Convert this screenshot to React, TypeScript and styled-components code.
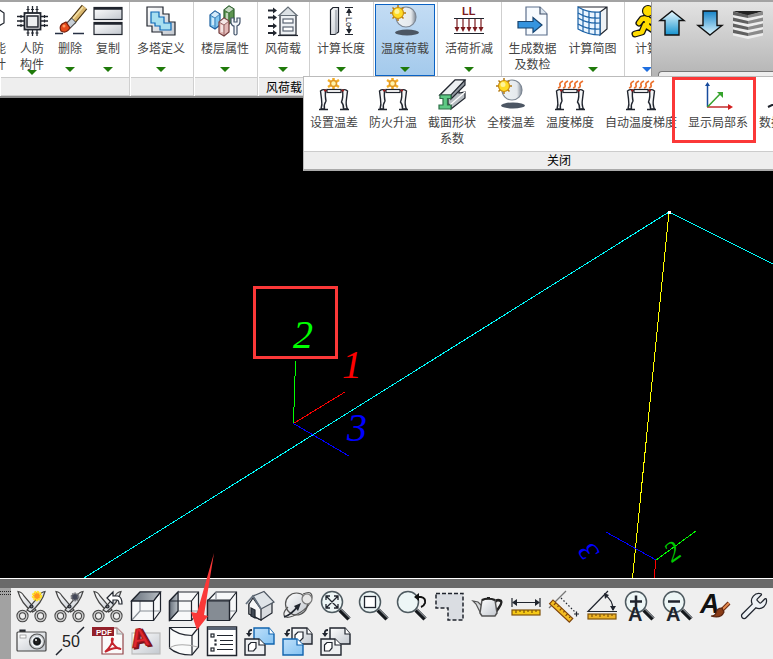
import React from "react";
import styled, { createGlobalStyle, css } from "styled-components";

const GlobalStyle = createGlobalStyle`
  * { box-sizing: border-box; }
  html, body { margin: 0; height: 100%; overflow: hidden; }
  body { font-family: "Liberation Sans", "Noto Sans CJK SC", sans-serif; font-size: 12px; line-height: 16px; color: #444; }
  button { font: inherit; color: inherit; background: none; border: 0; padding: 0; margin: 0; }
`;

const Shell = styled.div`
  position: relative;
  display: flex;
  flex-direction: column;
  height: 100vh;
  overflow: hidden;
  background: #000;
`;

/* ---------- ribbon ---------- */

const Ribbon = styled.header`
  position: relative;
  z-index: 2;
  display: flex;
  flex: none;
  height: 98px;
  background: #fff;
  border-top: 2px solid #a3a3a3;
  border-bottom: 2px solid #8a8a8a;
`;

const Group = styled.section<{ $w?: number }>`
  display: flex;
  flex-direction: column;
  flex: ${(p) => (p.$w ? "none" : "1")};
  width: ${(p) => (p.$w ? `${p.$w}px` : "auto")};
  min-width: 0;
  overflow: hidden;
  border-right: 1px solid #cfcfcf;
`;

const GroupBody = styled.div<{ $end?: boolean; $start?: boolean }>`
  display: flex;
  flex: 1;
  padding: 2px ${(p) => (p.$end ? 2 : 1)}px 1px 0;
  justify-content: ${(p) => (p.$end ? "flex-end" : p.$start ? "flex-start" : "center")};
`;

const GroupTitle = styled.div`
  height: 19px;
  margin: 0 0 0 1px;
  padding-top: 2px;
  background: #eee;
  border-top: 1px solid #ccc;
  border-bottom: 1px solid #ccc;
  color: #000;
  text-align: center;
`;

const RibbonButton = styled.button<{ $active?: boolean; $w?: number }>`
  display: flex;
  flex-direction: column;
  align-items: center;
  flex: none;
  width: ${(p) => p.$w ?? 60}px;
  height: 72px;
  padding-top: 1px;
  border: 1px solid transparent;
  ${(p) =>
    p.$active &&
    css`
      border-color: #0a62c4;
      background: linear-gradient(#c3dcf4, #a4caec);
    `}
`;

const Label = styled.span`
  min-height: 26px;
  margin-top: 5px;
  text-align: center;
  white-space: pre;
`;

const Caret = styled.span<{ $color?: string }>`
  border: 5px solid transparent;
  border-top-color: ${(p) => p.$color ?? "#1f7a0a"};
  border-bottom: 0;
`;

const NavPanel = styled.nav`
  position: absolute;
  top: 0;
  right: 0;
  display: flex;
  flex-direction: column;
  justify-content: space-between;
  width: 122px;
  height: 75px;
  padding: 4px 0 0 1px;
  background: linear-gradient(#e3e3e3, #b4b4b4);
  border-left: 1px solid #999;
`;

const NavRow = styled.div`
  display: flex;
`;

const NavButton = styled.button`
  flex: none;
  width: 38px;
  height: 32px;
`;

const NavTray = styled.div`
  height: 6px;
  margin-left: 5px;
  background: #eee;
  border: 1px solid #777;
  border-width: 1px 0 0 1px;
  border-radius: 4px 0 0 0;
`;

/* ---------- drop-down panel ---------- */

const DropPanel = styled.section`
  position: absolute;
  top: 76px;
  left: 303px;
  z-index: 3;
  width: 512px;
  background: #fff;
  border: 1px solid #bbb;
  border-bottom: 2px solid #aaa;
`;

const DropItems = styled.div`
  display: flex;
  gap: 11px;
  height: 74px;
  padding: 2px 0 0 6px;
`;

const DropButton = styled.button<{ $left?: boolean }>`
  display: flex;
  flex: none;
  flex-direction: column;
  align-items: center;
  min-width: 48px;
  ${Label} {
    margin-top: 6px;
    align-self: ${(p) => (p.$left ? "flex-start" : "center")};
  }
`;

const CloseButton = styled.button`
  display: block;
  width: 100%;
  height: 18px;
  background: #eee;
  border-top: 1px solid #ccc;
  color: #000;
`;

/* ---------- drawing area ---------- */

const Viewport = styled.main`
  flex: 1;
  min-height: 0;
  overflow: hidden;
  background: #000;
`;

const SceneSvg = styled.svg`
  display: block;
  width: 100%;
  height: 100%;
  font-family: "Liberation Serif", serif;
  font-style: italic;
`;

const Mark = styled.div<{ $x: number; $y: number; $w: number; $h: number }>`
  position: absolute;
  z-index: 4;
  left: ${(p) => p.$x}px;
  top: ${(p) => p.$y}px;
  width: ${(p) => p.$w}px;
  height: ${(p) => p.$h}px;
  border: 3px solid #fb3838;
  pointer-events: none;
`;

const Pointer = styled.svg`
  position: absolute;
  z-index: 4;
  left: 190px;
  bottom: 28px;
  pointer-events: none;
`;

/* ---------- bottom toolbar ---------- */

const BottomBar = styled.footer`
  display: flex;
  flex: none;
  border-top: 1px solid #fff;
  background: #efefef;
  box-shadow: inset 0 9px #6a6a6a;
  padding-top: 9px;
`;

const Grip = styled.div`
  width: 11px;
  flex: none;
  padding-top: 3px;
  background: #a2a2a2;
`;

const GripDots = styled.div`
  height: 4px;
  border: 1px dotted #222;
  border-width: 1px 0;
`;

const Rows = styled.div`
  flex: 1;
  min-width: 0;
  padding: 0 0 1px 2px;
`;

const ToolRow = styled.div`
  display: flex;
  height: 35px;
`;

const ToolButton = styled.button`
  display: flex;
  justify-content: center;
  flex: none;
  width: 38px;
  padding-top: 3px;
`;

const IconSvg = styled.svg`
  display: block;
  flex: none;
  margin: 0 auto;
  overflow: visible;
  font-family: "Liberation Sans", sans-serif;
`;

const Icon = ({ children }: { children: React.ReactNode }) => (
  <IconSvg width="30" height="30" viewBox="0 0 30 30" fill="none" stroke="#20252e" strokeWidth="1.2" aria-hidden="true">
    <defs>
      <linearGradient id="metal" x2="1" y2="1"><stop stopColor="#fff" /><stop offset="1" stopColor="#c3c8cf" /></linearGradient>
      <linearGradient id="shade" x2="1" y2="0"><stop stopColor="#68717c" /><stop offset="1" stopColor="#b8bec4" /></linearGradient>
      <linearGradient id="moon" x2="1"><stop stopColor="#eef3f6" /><stop offset=".75" stopColor="#e5e9ed" /><stop offset="1" stopColor="#7d8794" /></linearGradient>
      <linearGradient id="aqua" y2="1" x2="0"><stop stopColor="#eafaff" /><stop offset="1" stopColor="#1593cf" /></linearGradient>
      <linearGradient id="aquaDown" y2="1" x2="0"><stop stopColor="#1583c8" /><stop offset="1" stopColor="#dff7ff" /></linearGradient>
      <linearGradient id="sky" x2="1" y2="1"><stop stopColor="#bfe0fa" /><stop offset="1" stopColor="#83c2f2" /></linearGradient>
    </defs>
    {children}
  </IconSvg>
);

/* ---------- ribbon icons ---------- */

const Hexagon = () => (
  <Icon><path d="M8 6 16 1 25 7V17L16 22 8 17Z" fill="#fff" /></Icon>
);

const Chip = () => (
  <Icon>
    <path d="M11 0V7M15.500 0V7M20 0V7M11 23V30M15.500 23V30M20 23V30M0 10.500H7M0 15H7M0 19.500H7M24 10.500H31M24 15H31M24 19.500H31" strokeWidth="1.300" />
    <path d="M9.500 3.500H12.500M14 3.500H17M18.500 3.500H21.500M9.500 27H12.500M14 27H17M18.500 27H21.500M4 9V12M4 13.500V16.500M4 18V21M27.500 9V12M27.500 13.500V16.500M27.500 18V21" />
    <rect x="7.500" y="7" width="16" height="16.500" fill="#fff" strokeWidth="1.800" />
    <rect x="10" y="10" width="11" height="11" fill="#eceef0" strokeWidth="1.500" />
  </Icon>
);

const Brush = () => (
  <Icon>
    <path d="M0 27.500H29" stroke="#273044" strokeWidth="1.500" strokeDasharray="8 10 11 2" />
    <path d="M29.500 1 17 16" stroke="#453010" strokeWidth="7" />
    <path d="M29.500 1 17 16" stroke="#d9b66d" strokeWidth="5" />
    <path d="M28 1 16 15" stroke="#f4e0a5" strokeWidth="1.500" />
    <path d="M19 14 13 20" stroke="#444" strokeWidth="7" />
    <path d="M18.500 14.500 13 20" stroke="#c9d0d7" strokeWidth="5" />
    <path d="M7 18Q4 21 6 25 11 28 15 22L11 16Z" fill="#e64a19" stroke="#761f0b" />
    <circle cx="9" cy="20" r="1.500" fill="#ff9a62" stroke="none" />
  </Icon>
);

const Copies = () => (
  <Icon>
    <rect x="1" y="1.500" width="28" height="12" fill="url(#metal)" />
    <rect x="1" y="16.500" width="28" height="12" fill="url(#metal)" />
    <path d="M1 2.500H29M1 17.500H29" strokeWidth="2.500" />
  </Icon>
);

const Towers = () => (
  <Icon>
    <path d="M1 1H17V8H23V16H29V29H16V26H6V20H1Z" fill="url(#metal)" />
    <path d="M5 6H13V11H18V17H25V24H14V20H9V17H5Z" fill="#a7dff0" stroke="#0b67b5" />
  </Icon>
);

const Prism = ({ x, y, fill, line }: { x: number; y: number; fill: string; line: string }) => (
  <g transform={`translate(${x} ${y})`} stroke={line}>
    <path d="M0 4 5 0 10 3V14L5 18 0 15Z" fill={fill} />
    <path d="M0 4 5 7 10 3 5 0Z" fill="#fff" fillOpacity=".65" strokeWidth=".7" />
    <path d="M3 7V14" stroke="#fff" strokeOpacity=".6" strokeWidth="2.500" />
    <path d="M5 7V18" strokeWidth=".7" />
  </g>
);

const WRENCH =
  "M14.7 6.3a1 1 0 0 0 0 1.400l1.600 1.600a1 1 0 0 0 1.400 0l3.106-3.105c.32-.322.863-.22.983.218a6 6 0 0 1-8.259 7.057l-7.910 7.910a1 1 0 0 1-2.999-3l7.910-7.910a6 6 0 0 1 7.057-8.259c.438.12.54.662.219.984z";

const Floors = () => (
  <Icon>
    <Prism x={14} y={0} fill="#5d9550" line="#285d28" />
    <Prism x={0} y={5} fill="#83c7ef" line="#1c60a0" />
    <Prism x={9} y={12} fill="#e3b9b7" line="#743c3d" />
    <path d="M21 12V17Q22 20 24 20V28Q25.500 30 27 28V20Q30 19 30 16V12L27 12V16H24V12Z" fill="#f4f7fa" stroke="#43546b" />
  </Icon>
);

const Wind = () => (
  <Icon>
    <path d="M0 4.500H7M0 11.500H7M0 20H7M0 27H7" strokeWidth="1.800" />
    <path d="M5 1.500 9 4.500 5 7.500ZM5 8.500 9 11.500 5 14.500ZM5 17 9 20 5 23ZM5 24 9 27 5 30Z" fill="#20252e" stroke="none" />
    <path d="M12 9.500H28V29H12Z" fill="#edf0f3" />
    <path d="M11 9.500 20 1 29 9.500Z" fill="#dce1e5" stroke="#666f78" />
    <path d="M10 29.500H30" />
    <rect x="15" y="13" width="10" height="4" fill="#fff" stroke="#5b6573" />
    <rect x="15" y="21" width="10" height="4" fill="#fff" stroke="#5b6573" />
  </Icon>
);

const ColumnLength = () => (
  <Icon>
    <path d="M4.500 4 7 1.500H12.500V26L9 28.500H4.500Z" fill="url(#metal)" />
    <path d="M10 4V28" stroke="#969da6" />
    <path d="M19 1.500H27M19 28.500H27M23 3V10M23 20V27" />
    <path d="M20 7 23 2 26 7ZM20 23 23 28 26 23Z" fill="#20252e" stroke="none" />
    <text x="0" y="0" transform="translate(20 11) rotate(90)" fill="#20252e" stroke="none" fontSize="9">Lo</text>
  </Icon>
);

const SunMoon = () => (
  <Icon>
    <ellipse cx="17" cy="26.500" rx="12" ry="3" fill="#4c5663" stroke="none" />
    <circle cx="16" cy="11" r="10" fill="url(#moon)" stroke="#7d8794" />
    <path d="M8-1V15M0 7H16M2.500 1.500 13.500 12.500M13.500 1.500 2.500 12.500" stroke="#b47a13" strokeWidth="1.500" />
    <circle cx="8" cy="7" r="5.500" fill="#ffdc27" stroke="#c98c10" />
    <circle cx="7" cy="5.500" r="2.500" fill="#fff49a" stroke="none" />
  </Icon>
);

const LiveLoad = () => (
  <Icon>
    <text x="8" y="9" fill="#7b1b1e" stroke="none" fontSize="11" fontWeight="700">LL</text>
    <path d="M0 12.500H30M0 27.500H30" />
    <path d="M3 13V24M9 13V24M15 13V24M21 13V24M27 13V24" stroke="#7b1b1e" />
    <path d="M.5 21H5.500L3 26ZM6.500 21H11.500L9 26ZM12.500 21H17.500L15 26ZM18.500 21H23.500L21 26ZM24.500 21H29.500L27 26Z" fill="#7b1b1e" stroke="none" />
  </Icon>
);

const Generate = () => (
  <Icon>
    <path d="M8 1H22L29 8V29H8Z" fill="#f7fbff" stroke="#5d708d" />
    <path d="M22 1V8H29" fill="#dbe5ef" stroke="#40516a" />
    <path d="M0 15.500H15V11.500L24 19 15 26.500V22H0Z" fill="#3594df" stroke="#18446f" />
  </Icon>
);

const GridSurface = () => (
  <Icon>
    <path d="M0 1H29V23L22 29V6L29 1" fill="#eef2f5" />
    <path d="M0 1Q10 7 22 6V29Q10 29 0 23Z" fill="#eaf5ff" stroke="#1a61a6" />
    <path d="M5 3.500V26M11 5.500V28M17 6V29M0 7Q10 13 22 12M0 12Q10 18 22 17M0 18Q10 24 22 23" stroke="#1a61a6" />
  </Icon>
);

const Runner = () => (
  <Icon>
    <path d="M15 12 10 13 7 17M15 13 15 20 21 24M13 19 10 26 3 28M15 13 22 17" stroke="#111" strokeWidth="7" strokeLinecap="round" strokeLinejoin="round" />
    <path d="M15 12 10 13 7 17M15 13 15 20 21 24M13 19 10 26 3 28M15 13 22 17" stroke="#ffdc00" strokeWidth="4.500" strokeLinecap="round" strokeLinejoin="round" />
    <circle cx="16" cy="5" r="5.500" fill="#ffdc00" stroke="#111" />
  </Icon>
);

const UpArrow = () => (
  <Icon><path d="M15 4 27 13.500H22V28H8V13.500H3Z" fill="url(#aqua)" stroke="#111" strokeWidth="1.400" /></Icon>
);
const DownArrow = () => (
  <Icon><path d="M15 28 27 18.500H22V4H8V18.500H3Z" fill="url(#aquaDown)" stroke="#111" strokeWidth="1.400" /></Icon>
);
const Stack = () => (
  <Icon>
    <g stroke="none">
      <path d="M0 4H30L15 9Z" fill="#222" />
      {[0, 6, 12, 18].map((d) => (
        <g key={d} transform={`translate(0 ${d})`}>
          <path d="M0 4.500 15 8V12L0 9Z" fill="#606060" />
          <path d="M30 4.500 15 8V12L30 9Z" fill="#8a8a8a" />
          <path d="M0 8 15 11 30 8V10.500L15 14 0 10.500Z" fill="#ededed" />
        </g>
      ))}
    </g>
  </Icon>
);

/* ---------- drop-down icons ---------- */

const FrameShape = () => (
  <>
    <path d="M6.500 11Q6 18 7 22 4.500 26 5.500 30H2Q3.500 26 2.500 20L1.500 12Q4 10 6.500 11ZM23.500 11Q26 10 28.500 12L27.500 20Q26.500 26 28.500 30H24.500Q25 26 22.500 23 24.500 18 23.500 11Z" fill="#f6f7f8" strokeWidth="1.400" />
    <path d="M0 30.500H9M21 30.500H30" strokeWidth="1.500" />
    <path d="M5 11.500H25" stroke="#a32020" strokeWidth="1.800" />
    <rect x="8" y="10.500" width="14" height="3" fill="#fff" />
  </>
);

const FrameSun = () => (
  <Icon>
    <path d="M14.500-1V10M9 1 20 8M20 1 9 8" stroke="#f3ac25" strokeWidth="2.500" />
    <circle cx="14.500" cy="4.500" r="3" fill="#fff4ad" stroke="#e19722" strokeWidth="1.500" />
    <FrameShape />
  </Icon>
);

const Flame = ({ x }: { x: number }) => (
  <path d={`M${x} 9Q${x + 3} 8 ${x + 2} 6T${x + 5} 2`} />
);

const FrameFlame = () => (
  <Icon>
    <g stroke="#ec7330" strokeWidth="1.700">
      {[3, 8, 13, 18, 23].map((x) => <Flame key={x} x={x} />)}
    </g>
    <FrameShape />
  </Icon>
);

const SteelSection = () => (
  <Icon>
    <path d="M11 20 22 9V14L28 13V19L14 30V26L11 25Z" fill="#b8bec3" />
    <path d="M3 16 18 1H28V6L14 20V16Z" fill="#9299a1" />
    <path d="M3 16 18 1H28L14 16Z" fill="#edf0f2" />
    <path d="M13 26 28 13" stroke="#fff" />
    <path d="M3 16H14V19.500H10.500V26H14V30H2V26H6V19.500H3Z" fill="#5ec985" stroke="#2d7148" />
  </Icon>
);

const Axes = () => (
  <Icon>
    <path d="M4.500 28V5" stroke="#174b9d" strokeWidth="1.500" />
    <path d="M2 7 4.500 3 7 7Z" fill="#174b9d" stroke="none" />
    <path d="M4 28H27" stroke="#c22d2d" strokeWidth="1.500" />
    <path d="M25 25 30 28 25 31Z" fill="#d31e1e" stroke="none" />
    <path d="M4.500 28 18 14" stroke="#35a32c" strokeWidth="1.500" />
    <path d="M14 13H20V19Z" fill="#35a32c" stroke="none" />
  </Icon>
);

const Report = () => (
  <Icon><path d="M0 28 4 26H28" strokeWidth="2" /></Icon>
);

/* ---------- toolbar icons ---------- */

const ScissorShape = () => (
  <>
    <path d="M1 0.500Q5 1 7 5L19 19 15.500 21Q4 12 1 .5Z" fill="url(#metal)" stroke="#444" />
    <path d="M28 .5Q24 1 22 5L10 19 13.500 21Q25 12 28 .5Z" fill="url(#metal)" stroke="#444" />
    <ellipse cx="5.500" cy="25" rx="4.300" ry="4.500" fill="#efefef" stroke="#444" strokeWidth="3.600" />
    <ellipse cx="23.500" cy="25" rx="4.300" ry="4.500" fill="#efefef" stroke="#444" strokeWidth="3.600" />
    <ellipse cx="5.500" cy="25" rx="4.300" ry="4.500" stroke="#c9c9c9" strokeWidth="1.600" />
    <ellipse cx="23.500" cy="25" rx="4.300" ry="4.500" stroke="#c9c9c9" strokeWidth="1.600" />
    <circle cx="14.500" cy="15.500" r="1.500" fill="#777" />
  </>
);

const ScissorsSun = () => (
  <Icon>
    <ScissorShape />
    <circle cx="20" cy="5" r="4" fill="#ff951f" stroke="#ffe42d" strokeWidth="2.500" strokeDasharray="2 .6" />
  </Icon>
);
const ScissorsDark = () => (
  <Icon>
    <ScissorShape />
    <circle cx="20" cy="6" r="3.500" fill="#434758" stroke="#77777b" strokeWidth="2" strokeDasharray="1.500 .7" />
  </Icon>
);
const ScissorsUndo = () => (
  <Icon>
    <ScissorShape />
    <path d="M14 7 20 1V5H25Q29 6 29 13H26Q26 9 24 9H20V13Z" fill="#fff" />
  </Icon>
);

const Cube = ({ face }: { face: "top" | "left" | "front" }) => (
  <Icon>
    <path d="M.5 10 9 1H29.500V20L22.500 29.500H.5Z" fill="#f7f8f9" />
    {face !== "front" && <path d="M9 1V20H29.500M9 20 .5 29.500" stroke="#8a9098" />}
    {face === "top" && <path d="M.5 10 9 1H29.500L22.500 10Z" fill="url(#shade)" />}
    {face === "left" && <path d="M.5 10 9 1V20L.5 29.500Z" fill="url(#shade)" />}
    {face === "front" && <path d="M.5 9H22.500V29.500H.5Z" fill="#858c94" />}
    {face === "front" && <path d="M9 1V9M22.500 20H29" stroke="#8a9098" />}
    <path d="M.5 10H22.500V29.500H.5ZM22.500 10 29.500 1" />
  </Icon>
);

const House = () => (
  <Icon>
    <path d="M4 13V23L16 29 27 22V11L17 4Z" fill="#d9dcdf" />
    <path d="M4 13 8 7 16 18V29L4 23Z" fill="#f7f7f7" />
    <path d="M8 5 19 .5 29 11 16 18Z" fill="#dfe4e8" stroke="#4e5762" />
    <path d="M1 13 8 5 16 18" stroke="#65707d" strokeWidth="1.800" />
    <path d="M6 17 10 19V27L6 25Z" fill="#414954" />
  </Icon>
);

const Orbit = () => (
  <Icon>
    <circle cx="13.500" cy="13" r="11" fill="url(#metal)" stroke="#555" />
    <path d="M20 3Q29-1 29 6 27 18 10 25 2 28 1 24 0 21 5 16" stroke="#555" />
    <circle cx="24" cy="8" r="5" fill="#e7e7e7" stroke="#777" />
    <path d="M1 26Q8 24 15 15" strokeWidth="1.800" />
    <path d="M11 15 18 12 15 20Z" fill="#20252e" stroke="none" />
  </Icon>
);

const Lens = ({ children }: { children?: React.ReactNode }) => (
  <Icon>
    <path d="M19 19 28 28" stroke="#15181c" strokeWidth="4.500" />
    <path d="M20 18 29 27" stroke="#81868b" />
    <circle cx="11" cy="11" r="10.500" fill="#edf6f6" stroke="#4e5a60" strokeWidth="1.500" />
    {children}
  </Icon>
);

const ZoomExtents = () => (
  <Lens><path d="M5 5 17 17M17 5 5 17M5 9V5H9M13 5H17V9M17 13V17H13M9 17H5V13" strokeWidth="1.300" /></Lens>
);
const ZoomWindow = () => (
  <Lens><rect x="5.500" y="5.500" width="11" height="11" fill="#fff" strokeWidth="1.300" /></Lens>
);
const ZoomPrevious = () => (
  <Lens>
    <path d="M20 6H24Q29 7 28 12 27 15 24 16" stroke="#111" strokeWidth="2" />
    <path d="M17 6 22 2V10Z" fill="#111" stroke="none" />
  </Lens>
);
const TextIn = () => (
  <Lens>
    <path d="M5 10.500H17M11 4.500V16.500" strokeWidth="2.500" />
    <text x="3" y="30" fill="#20252e" stroke="none" fontSize="20" fontWeight="700">A</text>
  </Lens>
);
const TextOut = () => (
  <Lens>
    <path d="M5 10.500H17" strokeWidth="2.500" />
    <text x="3" y="30" fill="#20252e" stroke="none" fontSize="20" fontWeight="700">A</text>
  </Lens>
);

const Region = () => (
  <Icon><path d="M1 2.500H28V29H13V17H1Z" fill="#dadde2" strokeWidth="1.500" strokeDasharray="4 2" /></Icon>
);

const Teapot = () => (
  <Icon>
    <path d="M22 11Q24 8 28 10 30 12 22 22" stroke="#222" strokeWidth="2.600" />
    <path d="M9 15 5 11 0 10 3 13 8 23Z" fill="#d7d9db" stroke="#555" />
    <path d="M9 9Q15 7 22 9L24 22 22 25H9L7 22Z" fill="url(#metal)" stroke="#555" strokeWidth="1.500" />
    <path d="M9 9Q15 6 22 9M14 7H17" stroke="#222" strokeWidth="2" />
  </Icon>
);

const Distance = () => (
  <Icon>
    <path d="M1 7V16M29 7V16M2 11.500H28" />
    <path d="M6 8 1 11.500 6 15ZM24 8 29 11.500 24 15Z" fill="#20252e" stroke="none" />
    <rect x="1" y="19" width="28" height="5" fill="#f5c916" stroke="#80540b" />
    <path d="M5 19V22M9 19V21M13 19V22M17 19V21M21 19V22M25 19V21" stroke="#80540b" />
  </Icon>
);

const DistanceAny = () => (
  <Icon>
    <path d="M0 17 17 0" stroke="#777" />
    <g transform="translate(4 9) rotate(43)">
      <rect width="27" height="5" fill="#f3bd22" stroke="#80450b" />
      <path d="M4 0V3M8 0V2M12 0V3M16 0V2M20 0V3M24 0V2" stroke="#80450b" />
    </g>
    <path d="M12 7 27 22" strokeDasharray="1.500 2" />
    <path d="M25 23H30M27.500 20.500V25.500" />
  </Icon>
);

const Angle = () => (
  <Icon>
    <path d="M21 0 1 20.500H30M18 4Q26 9 26 19" />
    <path d="M17 2 22 4 18 8ZM23 15H29L26 20Z" fill="#20252e" stroke="none" />
    <rect x="1" y="23" width="28" height="5" fill="#edb325" stroke="#80540b" />
    <path d="M5 23V26M9 23V25M13 23V26M17 23V25M21 23V26M25 23V25" stroke="#80540b" />
  </Icon>
);

const TextBrush = () => (
  <Icon>
    <text x="-1" y="22" fill="#111" stroke="none" fontSize="27" fontWeight="700" fontStyle="italic">A</text>
    <path d="M28 12 20 20" stroke="#692b12" strokeWidth="4" />
    <path d="M28 12 20 20" stroke="#e58b50" strokeWidth="2" />
    <path d="M21 17Q16 17 15 22 14 25 10 25 20 28 23 21Z" fill="#8a3c17" stroke="#5a250f" />
  </Icon>
);

const Wrench = () => (
  <Icon><g transform="scale(1.250)"><path d={WRENCH} fill="#edf1f5" strokeWidth="1" /></g></Icon>
);

const Camera = () => (
  <Icon>
    <path d="M3 4H8V7H3Z" fill="#333" />
    <rect x="0" y="6" width="29" height="19" rx="1" fill="url(#metal)" stroke="#444" />
    <rect x="3" y="9" width="6" height="3" fill="#fff" stroke="#888" strokeWidth=".7" />
    <circle cx="20" cy="15.500" r="7.500" fill="#ccd1d5" stroke="#555" />
    <circle cx="20" cy="15.500" r="5" fill="#66717a" stroke="#fff" />
    <circle cx="20" cy="15.500" r="3" fill="#222" stroke="#111" />
    <circle cx="19" cy="14" r="1" fill="#fff" stroke="none" />
  </Icon>
);

const Elevation = () => (
  <Icon>
    <path d="M29 1 22 8M7 23 1 29" strokeWidth="1.500" />
    <text x="7" y="21" fill="#222" stroke="none" fontSize="16">50</text>
  </Icon>
);

const Pdf = () => (
  <Icon>
    <path d="M9 2H24L30 8V28H9Z" fill="#fafafa" stroke="#92464b" />
    <path d="M24 2V8H30" fill="#ddd" stroke="#999" />
    <path d="M12 26Q19 20 20 13 18 11 19 16 23 23 28 23 22 20 12 26Z" stroke="#c4242d" strokeWidth="1.800" />
    <rect x="-1" y="1" width="22" height="9" fill="#93202a" stroke="none" />
    <text x="3" y="8.500" fill="#fff" stroke="none" fontSize="8" fontWeight="700">PDF</text>
  </Icon>
);

const Cad = () => (
  <Icon>
    <rect x="1" y="7" width="28" height="21" fill="url(#metal)" stroke="#bbb" />
    <text transform="translate(3 23) rotate(-10)" fill="#8b121a" stroke="#77131a" strokeWidth="1.500" fontSize="26" fontWeight="700">A</text>
    <text transform="translate(1 22) rotate(-10)" fill="#e0262e" stroke="#a0141c" strokeWidth=".8" fontSize="26" fontWeight="700" aria-hidden="true">A</text>
  </Icon>
);

const CurvedBox = () => (
  <Icon>
    <path d="M.5 1.500H29.500V21L23 29Q8 29 .5 22Z" fill="#f9fafa" />
    <path d="M.5 1.500Q8 9 23 9.500V29M23 9.500 29.500 1.500" />
    <path d="M.5 22Q9 16 29 21" stroke="#aaa" />
  </Icon>
);

const ListBox = () => (
  <Icon>
    <rect x=".5" y="1" width="29" height="28.500" fill="#fff" strokeWidth="1.500" />
    <path d="M1 2.500H29" stroke="#596373" strokeWidth="3" />
    <rect x="4" y="8" width="3" height="3" /><rect x="8" y="14" width="1" height="1" />
    <rect x="8" y="18" width="1" height="1" /><rect x="4" y="22" width="3" height="3" />
    <path d="M10 9.500H26M13 14.500H26M13 18.500H26M10 23.500H26" />
  </Icon>
);

const Sheets = ({ kind }: { kind: "back" | "front" | "none" }) => (
  <Icon>
    <path d="M9 2H24L29 8V18H9Z" fill={kind === "back" ? "url(#sky)" : "url(#metal)"} stroke={kind === "back" ? "#1164af" : "#20252e"} strokeWidth="1.400" />
    {kind === "front" && <path d="M12 9 15 6H20V12L17 15H12Z" fill="#fff" />}
    <path d="M24 2V8H29" fill="#fff" stroke={kind === "back" ? "#1164af" : "#20252e"} />
    <path d="M0 13H14L20 19V29H0Z" fill={kind === "front" ? "url(#sky)" : "#eef0f2"} stroke={kind === "front" ? "#1164af" : "#20252e"} strokeWidth="1.400" />
    <path d="M14 13V19H20" fill="#fff" stroke={kind === "front" ? "#1164af" : "#20252e"} />
    {kind !== "front" && <path d="M3.500 19 6 16.500H11V22L8.500 25H3.500Z" fill="#fff" />}
    <path d="M7 4Q3 4 4 8" strokeWidth="1.800" />
    <path d="M1 7H7L4 11Z" fill="#20252e" stroke="none" />
  </Icon>
);

type Tool = [string, React.ReactNode];

const toolRows: Tool[][] = [
  [
    ["裁剪显示", <ScissorsSun />], ["裁剪隐藏", <ScissorsDark />], ["恢复裁剪", <ScissorsUndo />],
    ["俯视", <Cube face="top" />], ["左视", <Cube face="left" />], ["前视", <Cube face="front" />],
    ["主视图", <House />], ["旋转", <Orbit />], ["全图", <ZoomExtents />], ["窗口缩放", <ZoomWindow />],
    ["上一视图", <ZoomPrevious />], ["选区", <Region />], ["渲染", <Teapot />], ["水平距离", <Distance />],
    ["距离", <DistanceAny />], ["角度", <Angle />], ["文字放大", <TextIn />], ["文字缩小", <TextOut />],
    ["文字样式", <TextBrush />], ["设置", <Wrench />],
  ],
  [
    ["截图", <Camera />], ["标高", <Elevation />], ["导出PDF", <Pdf />], ["导出CAD", <Cad />],
    ["三维视图", <CurvedBox />], ["列表", <ListBox />], ["图层后置", <Sheets kind="back" />],
    ["图层前置", <Sheets kind="front" />], ["图层", <Sheets kind="none" />],
  ],
];

interface RibbonItem {
  label: string;
  icon: React.ReactNode;
  w?: number;
  active?: boolean;
  caret?: string | false;
}

interface RibbonGroup {
  w?: number;
  align?: "start" | "end";
  title?: string;
  items: RibbonItem[];
}

const groups: RibbonGroup[] = [
  {
    w: 130,
    align: "end",
    items: [
      { label: "性能\n设计", icon: <Hexagon />, w: 38, caret: false },
      { label: "人防\n构件", icon: <Chip />, w: 38 },
      { label: "删除", icon: <Brush />, w: 38 },
      { label: "复制", icon: <Copies />, w: 38 },
    ],
  },
  { w: 64, items: [{ label: "多塔定义", icon: <Towers /> }] },
  { w: 64, items: [{ label: "楼层属性", icon: <Floors /> }] },
  { w: 52, title: "风荷载", items: [{ label: "风荷载", icon: <Wind />, w: 48 }] },
  { w: 64, items: [{ label: "计算长度", icon: <ColumnLength /> }] },
  { w: 64, items: [{ label: "温度荷载", icon: <SunMoon />, active: true }] },
  { w: 64, items: [{ label: "活荷折减", icon: <LiveLoad /> }] },
  {
    w: 123,
    items: [
      { label: "生成数据\n及数检", icon: <Generate />, caret: false },
      { label: "计算简图", icon: <GridSurface /> },
    ],
  },
  { align: "start", items: [{ label: "计算", icon: <Runner />, w: 44, caret: "#1f6fe0" }] },
];

const dropItems: Tool[] = [
  ["设置温差", <FrameSun />],
  ["防火升温", <FrameSun />],
  ["截面形状\n系数", <SteelSection />],
  ["全楼温差", <SunMoon />],
  ["温度梯度", <FrameFlame />],
  ["自动温度梯度", <FrameFlame />],
  ["显示局部系", <Axes />],
  ["数据", <Report />],
];

const Scene = () => (
  <SceneSvg viewBox="0 98 773 480" preserveAspectRatio="xMinYMin slice" fill="none" strokeWidth="1" shapeRendering="crispEdges">
    <path d="M84 578 669 212 773 264" stroke="#00ffff" />
    <path d="M669 212 632.500 578" stroke="#ffff00" />
    <rect x="668" y="211" width="3" height="3" fill="#fff" />
    <path d="M293.500 423.500 295.500 361" stroke="#00ff00" />
    <path d="M293.500 423.500 345 392" stroke="#ff0000" />
    <path d="M293.500 423.500 349 456" stroke="#0000ff" />
    <path d="M656 560 696 531" stroke="#00ff00" />
    <path d="M656 560 606 532" stroke="#0000ff" />
    <path d="M655.500 560 654.500 578" stroke="#ff0000" />
    <text x="293" y="348" fontSize="40" fill="#00ff00">2</text>
    <text x="342" y="378" fontSize="40" fill="#ff0000">1</text>
    <text x="347" y="441" fontSize="40" fill="#0000ff">3</text>
    <text transform="translate(600 552) rotate(-125)" fontSize="28" fill="#0000ff">3</text>
    <text transform="translate(672 563) rotate(-35)" fontSize="28" fill="#00c800">2</text>
  </SceneSvg>
);

export default function App() {
  return (
    <Shell>
      <GlobalStyle />
      <Ribbon>
        {groups.map((g, i) => (
          <Group key={i} $w={g.w}>
            <GroupBody $end={g.align === "end"} $start={g.align === "start"}>
              {g.items.map((it) => (
                <RibbonButton key={it.label} $w={it.w} $active={it.active}>
                  {it.icon}
                  <Label>{it.label}</Label>
                  {it.caret !== false && <Caret $color={it.caret} />}
                </RibbonButton>
              ))}
            </GroupBody>
            <GroupTitle>{g.title}</GroupTitle>
          </Group>
        ))}
        <NavPanel>
          <NavRow>
            <NavButton aria-label="上一层"><UpArrow /></NavButton>
            <NavButton aria-label="下一层"><DownArrow /></NavButton>
            <NavButton aria-label="楼层组装"><Stack /></NavButton>
          </NavRow>
          <NavTray />
        </NavPanel>
      </Ribbon>
      <DropPanel>
        <DropItems>
          {dropItems.map(([label, icon], i) => (
            <DropButton key={label} $left={i === dropItems.length - 1}>
              {icon}
              <Label>{label}</Label>
            </DropButton>
          ))}
        </DropItems>
        <CloseButton>关闭</CloseButton>
      </DropPanel>
      <Viewport><Scene /></Viewport>
      <BottomBar>
        <Grip><GripDots /></Grip>
        <Rows>
          {toolRows.map((row, i) => (
            <ToolRow key={i}>
              {row.map(([name, icon]) => (
                <ToolButton key={name} aria-label={name}>{icon}</ToolButton>
              ))}
            </ToolRow>
          ))}
        </Rows>
      </BottomBar>
      <Mark $x={672} $y={77} $w={84} $h={66} />
      <Mark $x={253} $y={286} $w={85} $h={73} />
      <Pointer width="26" height="80" viewBox="0 0 26 80" aria-hidden="true">
        <path d="M24 2 14 64 18 65 7 79 1 61 7 62Z" fill="#fb3838" />
      </Pointer>
    </Shell>
  );
}
